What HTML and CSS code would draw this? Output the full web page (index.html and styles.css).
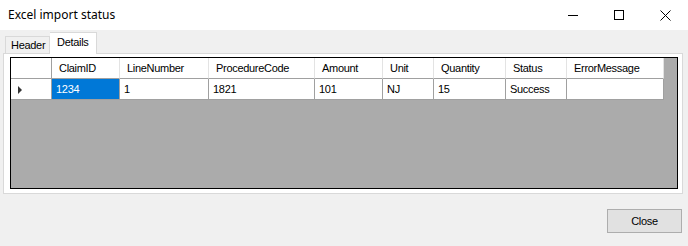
FILE: index.html
```html
<!DOCTYPE html>
<html lang="en">

<head>
    <meta charset="UTF-8">
    <title>Excel import status</title>
    <link rel="stylesheet" href="styles.css">
</head>

<body>
    <div class="window">
        <div class="titlebar">
            <span class="title">Excel import status</span>
            <div class="controls">
                <span class="ctl">
                    <svg width="10" height="10" viewBox="0 0 10 10"><path d="M0 5.5H10" stroke="#000" stroke-width="1"/></svg>
                </span>
                <span class="ctl">
                    <svg width="10" height="10" viewBox="0 0 10 10"><rect x="0.5" y="0.5" width="9" height="9" fill="none" stroke="#000" stroke-width="1"/></svg>
                </span>
                <span class="ctl">
                    <svg width="11" height="11" viewBox="0 0 11 11"><path d="M0.5 0.5L10.5 10.5M10.5 0.5L0.5 10.5" stroke="#000" stroke-width="1"/></svg>
                </span>
            </div>
        </div>

        <div class="content">
            <div class="tabs">
                <div class="tab tab-header">Header</div>
                <div class="tab tab-details active">Details</div>
            </div>
            <div class="panel">
                <div class="grid">
                    <div class="row head">
                        <div class="cell rowhead"></div>
                        <div class="cell c1">ClaimID</div>
                        <div class="cell c2">LineNumber</div>
                        <div class="cell c3">ProcedureCode</div>
                        <div class="cell c4">Amount</div>
                        <div class="cell c5">Unit</div>
                        <div class="cell c6">Quantity</div>
                        <div class="cell c7">Status</div>
                        <div class="cell c8">ErrorMessage</div>
                    </div>
                    <div class="row data">
                        <div class="cell rowhead"><span class="arrow"></span></div>
                        <div class="cell c1 selected">1234</div>
                        <div class="cell c2">1</div>
                        <div class="cell c3">1821</div>
                        <div class="cell c4">101</div>
                        <div class="cell c5">NJ</div>
                        <div class="cell c6">15</div>
                        <div class="cell c7">Success</div>
                        <div class="cell c8"></div>
                    </div>
                </div>
            </div>
            <div class="footer">
                <button class="btn">Close</button>
            </div>
        </div>
    </div>
</body>

</html>
```

FILE: styles.css
```css
body {
    margin: 0;
    background-color: #f0f0f0;
}

.window {
    width: 688px;
    height: 246px;
    overflow: hidden;
}

.titlebar {
    height: 30px;
    background-color: #fff;
    display: flex;
    align-items: center;
    justify-content: space-between;
}

.title {
    margin-left: 8px;
    font-family: "Noto Sans", sans-serif;
    font-size: 12px;
    color: #000;
    margin-top: -1px;
}

.controls {
    display: flex;
    height: 30px;
}

.ctl {
    width: 46px;
    display: flex;
    align-items: center;
    justify-content: center;
}

.content {
    padding: 2px 5px 0 3px;
    font-family: "Liberation Sans", sans-serif;
    font-size: 11px;
    letter-spacing: -0.3px;
}

.tabs {
    display: flex;
    height: 21px;
    padding-left: 2px;
    align-items: flex-end;
    position: relative;
    z-index: 1;
}

.tab {
    box-sizing: border-box;
    height: 17px;
    line-height: 17px;
    border: 1px solid #d9d9d9;
    border-bottom: none;
    background-color: #f0f0f0;
    white-space: nowrap;
}

.tab-header {
    width: 45px;
    padding-left: 5px;
}

.tab.active {
    width: 47px;
    height: 22px;
    line-height: 19px;
    padding-left: 7px;
    background-color: #fff;
    margin-bottom: -1px;
    border-left: none;
}

.panel {
    border: 1px solid #d9d9d9;
    background-color: #fff;
    height: 132px;
    padding: 3px 4px 4px 6px;
}

.grid {
    height: 132px;
    border: 1px solid #000;
    background-color: #ababab;
    box-sizing: border-box;
}

.row {
    display: flex;
}

.cell {
    box-sizing: border-box;
    height: 21px;
    line-height: 20px;
    padding-left: 4px;
    background-color: #fff;
    border-right: 1px solid #a0a0a0;
    border-bottom: 1px solid #a0a0a0;
    white-space: nowrap;
    overflow: hidden;
}

.head .cell {
    padding-left: 7px;
    border-right-color: #e3e3e3;
}

.head .rowhead,
.rowhead {
    width: 41px;
    border-right-color: #a0a0a0;
}

.c1 { width: 68px; }
.c2 { width: 89px; }
.c3 { width: 106px; }
.c4 { width: 68px; }
.c5 { width: 51px; }
.c6 { width: 72px; }
.c7 { width: 61px; }
.c8 { width: 97px; }

.selected {
    background-color: #0078d7;
    color: #fff;
}

.arrow {
    display: inline-block;
    width: 0;
    height: 0;
    border-top: 4px solid transparent;
    border-bottom: 4px solid transparent;
    border-left: 4px solid #333;
    margin-left: 3px;
    vertical-align: middle;
}

.footer {
    display: flex;
    justify-content: flex-end;
    padding-top: 15px;
}

.btn {
    width: 75px;
    height: 24px;
    margin-right: 1px;
    background-color: #e1e1e1;
    border: 1px solid #adadad;
    font-family: "Liberation Sans", sans-serif;
    font-size: 11px;
    letter-spacing: -0.3px;
    color: #000;
    padding: 0;
}
```
